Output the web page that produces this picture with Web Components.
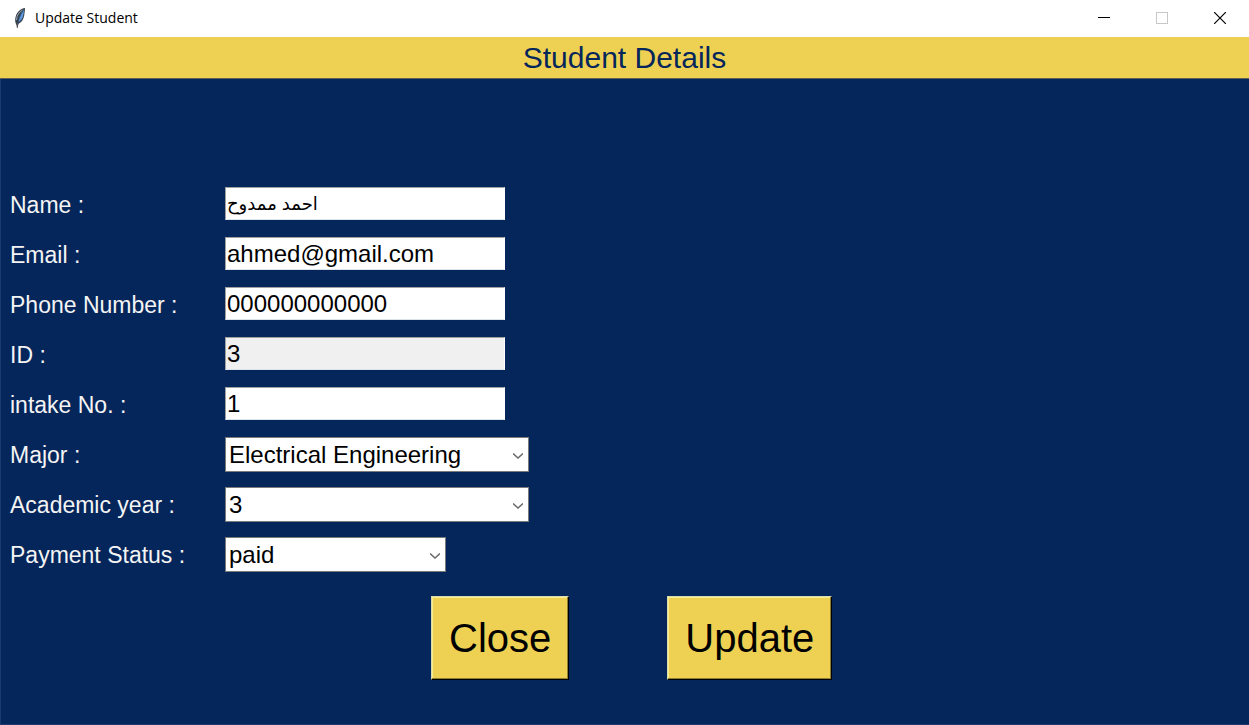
<!DOCTYPE html>
<html lang="en">
<head>
<meta charset="utf-8">
<title>Update Student</title>
<style>
  html, body { height: 100%; margin: 0; }
  body { font-family: "Liberation Sans", Arial, sans-serif; background: #05265b; }
</style>
</head>
<body>
<app-window caption="Update Student">
  <page-heading slot="heading">Student Details</page-heading>
  <student-form></student-form>
</app-window>

<template id="app-window">
  <style>
    :host { display: flex; flex-direction: column; min-height: 100%; background: #05265b; }
    header { display: flex; align-items: center; box-sizing: border-box; height: 37px; padding-bottom: 2px; background: #fff; color: #000; }
    .icon { width: 16px; height: 22px; margin: 0 7px 0 12px; flex: none; }
    .caption { flex: 1; font: 14px/20px "Open Sans", "Noto Sans", sans-serif; }
    button { width: 58px; height: 35px; padding: 0; border: 0; background: none; display: grid; place-items: center; }
    main { flex: 1; display: flex; flex-direction: column; box-sizing: border-box; border-left: 1px solid #1b3a6b; border-bottom: 1px solid #1b3a6b; }
  </style>
  <header>
    <svg class="icon" viewBox="0 0 16 22" aria-hidden="true">
      <path d="M13 1 C9 1.500 5.500 4.500 4 8.500 C2.800 12 3 14.500 3.800 16.500 L5.500 20.500 L6.500 16.800 C9.500 15.500 11.500 12.500 12.200 8.500 C12.600 5.500 13 3.500 13 1Z" fill="#39434f"/>
      <path d="M12 2.500 C9.500 4 7.500 9 6 15.500 C9 14 10.800 11 11.300 8 C11.600 6 12 4 12 2.500Z" fill="#5f9be0"/>
      <path d="M10.500 3 C7 5 4.800 8 4.500 13" fill="none" stroke="#9ba7b3"/>
      <path d="M11.500 3 C8 8 6 13 5.300 20" fill="none" stroke="#25415f" stroke-width=".8"/>
      <path d="M5.300 16V21" stroke="#555"/>
    </svg>
    <span class="caption"></span>
    <button type="button" aria-label="Minimize"><svg width="12" height="12" shape-rendering="crispEdges"><path d="M0 5.500H12" stroke="#000"/></svg></button>
    <button type="button" aria-label="Maximize" disabled><svg width="12" height="12" shape-rendering="crispEdges"><path d="M.5 .5H11.500V11.500H.5Z" fill="none" stroke="#c8c8c8"/></svg></button>
    <button type="button" aria-label="Close window"><svg width="12" height="12"><path d="M0 0L12 12M12 0L0 12" stroke="#000" stroke-width="1.200"/></svg></button>
  </header>
  <slot name="heading"></slot>
  <main><slot></slot></main>
</template>

<template id="page-heading">
  <style>
    :host { display: block; background: #eed153; color: #05265b; border-bottom: 1px solid #5e6257; }
    h1 { margin: 0; font-size: 30px; font-weight: 400; line-height: 41px; text-align: center; }
  </style>
  <h1><slot></slot></h1>
</template>

<template id="form-row">
  <style>
    :host { display: grid; grid-template-columns: 215px 1fr; align-items: start; height: 50px; color: #f4f4f4; font-size: 23px; }
    label { line-height: 37px; }
    input, select { box-sizing: border-box; margin: 0; border-radius: 0; outline: 0; background: #fff; color: #000; font: 24px "Liberation Sans", Arial, "DejaVu Sans", sans-serif; }
    input { width: 280px; height: 33px; padding: 0 1px; border: 1px solid; border-color: #a0a0a0 #fff #dde3ea #a0a0a0; }
    input:lang(ar) { font-size: 18px; }
    input:read-only { background: #f0f0f0; }
    .combo { display: grid; align-items: center; width: 304px; }
    .combo.narrow { width: 221px; }
    .combo > * { grid-area: 1 / 1; }
    select { width: 100%; height: 35px; padding: 0 24px 0 3px; border: 1px solid #7a7a7a; appearance: none; }
    svg { justify-self: end; margin-right: 6px; padding-top: 2px; pointer-events: none; }
  </style>
  <label for="control"></label>
</template>

<template id="action-button">
  <style>
    :host { display: block; }
    button { box-sizing: border-box; padding: 17px; border: 1px solid; border-color: #d9dcae #000 #000 #d9dcae; border-radius: 0; background: #eed153; color: #000; box-shadow: inset -1px -1px #8f7d31, inset 1px 1px #f9ec8a; font: 40px/48px "Liberation Sans", Arial, sans-serif; }
  </style>
  <button type="button"><slot></slot></button>
</template>

<template id="student-form">
  <style>
    :host { display: block; padding: 108px 0 44px; }
    .fields { padding-left: 9px; }
    .actions { display: grid; grid-template-columns: 20% 20%; justify-content: center; justify-items: center; margin-top: 9px; }
  </style>
  <form>
    <div class="fields">
      <form-row label="Name :" value="احمد ممدوح" value-lang="ar"></form-row>
      <form-row label="Email :" value="ahmed@gmail.com"></form-row>
      <form-row label="Phone Number :" value="000000000000"></form-row>
      <form-row label="ID :" value="3" readonly></form-row>
      <form-row label="intake No. :" value="1"></form-row>
      <form-row label="Major :" value="Electrical Engineering" kind="select"></form-row>
      <form-row label="Academic year :" value="3" kind="select"></form-row>
      <form-row label="Payment Status :" value="paid" kind="select" narrow></form-row>
    </div>
    <div class="actions">
      <action-button>Close</action-button>
      <action-button>Update</action-button>
    </div>
  </form>
</template>

<script>
  class TemplateElement extends HTMLElement {
    connectedCallback() {
      if (this.shadowRoot) return;
      const root = this.attachShadow({ mode: "open" });
      root.append(document.getElementById(this.localName).content.cloneNode(true));
      this.render(root);
    }
    render() {}
  }

  customElements.define("app-window", class extends TemplateElement {
    render(root) {
      root.querySelector(".caption").textContent = this.getAttribute("caption");
    }
  });

  customElements.define("form-row", class extends TemplateElement {
    render(root) {
      const value = this.getAttribute("value");
      root.querySelector("label").textContent = this.getAttribute("label");
      if (this.getAttribute("kind") === "select") {
        const combo = document.createElement("div");
        combo.className = this.hasAttribute("narrow") ? "combo narrow" : "combo";
        combo.innerHTML = '<select id="control"></select><svg width="10" height="6" aria-hidden="true"><path d="M0 .5L5 5L10 .5" fill="none" stroke="#6a6a6a" stroke-width="1.500"/></svg>';
        combo.firstChild.add(new Option(value));
        root.append(combo);
      } else {
        const input = document.createElement("input");
        input.id = "control";
        input.type = "text";
        input.value = value;
        input.lang = this.getAttribute("value-lang") || "en";
        input.readOnly = this.hasAttribute("readonly");
        root.append(input);
      }
    }
  });

  customElements.define("page-heading", class extends TemplateElement {});
  customElements.define("action-button", class extends TemplateElement {});
  customElements.define("student-form", class extends TemplateElement {});
</script>
</body>
</html>
